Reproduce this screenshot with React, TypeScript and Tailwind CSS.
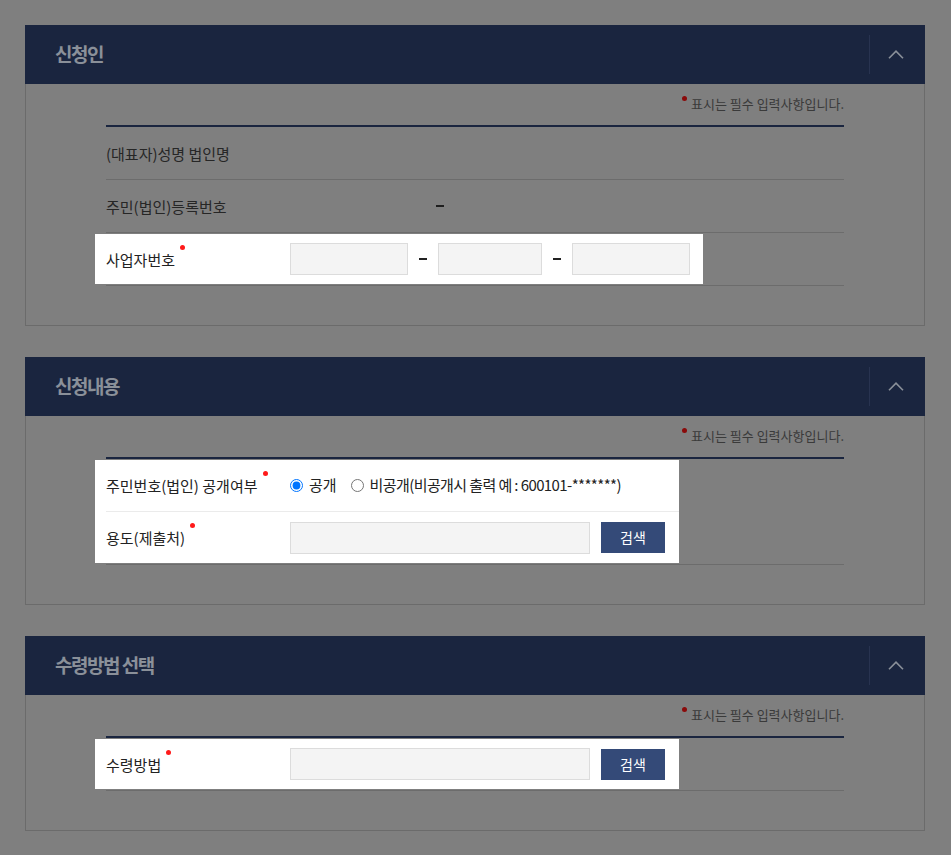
import type { ReactNode } from "react";

const FONT = { fontFamily: '"Noto Sans CJK KR", "Noto Sans", sans-serif' };

function RequiredDot({ dim = false }: { dim?: boolean }) {
  return (
    <span
      className={`absolute -right-[10px] -top-[4px] h-[5px] w-[5px] rounded-full ${
        dim ? "bg-[#8a0a0a]" : "bg-[#ff1a1a]"
      }`}
    />
  );
}

function Label({ text, required, dim }: { text: string; required?: boolean; dim?: boolean }) {
  return (
    <div className="w-[184px] shrink-0">
      <span className={`relative text-[15px] ${dim ? "text-[#262626]" : "text-[#222]"}`}>
        {text}
        {required && <RequiredDot dim={dim} />}
      </span>
    </div>
  );
}

function Dash({ dim }: { dim?: boolean }) {
  return <span className={`block h-[2px] w-[8px] ${dim ? "bg-[#1e1e1e]" : "bg-[#222]"}`} />;
}

function Panel({ title, children }: { title: string; children: ReactNode }) {
  return (
    <section className="w-[900px]">
      <div className="flex h-[59px] items-center justify-between bg-[#1a253f]">
        <h2 className="pl-[30px] text-[19px] font-bold tracking-[-1.5px] text-[#8a9099]">{title}</h2>
        <div className="flex h-[39px] w-[56px] items-center justify-center border-l border-[#283350] pr-[4px]">
          <svg width="16" height="9" viewBox="0 0 16 9">
            <path d="M1 8.2 L8 1.2 L15 8.2" stroke="#8a9099" strokeWidth="1.6" fill="none" />
          </svg>
        </div>
      </div>
      <div className="border border-t-0 border-[#6b6b6b] px-[80px] pb-[39px] pt-[10px]">
        <p className="flex h-[20px] items-center justify-end text-[13px] text-[#3a3a3a]">
          <span className="mr-[4px] -translate-y-[6px]">
            <span className="block h-[5px] w-[5px] rounded-full bg-[#8a0a0a]" />
          </span>
          표시는 필수 입력사항입니다.
        </p>
        <div className="mt-[11px] border-t-2 border-[#1a253f]">{children}</div>
      </div>
    </section>
  );
}

function DimRow({ label, children }: { label: string; children?: ReactNode }) {
  return (
    <div className="flex h-[53px] items-center border-b border-[#6c6c6c]">
      <Label text={label} dim />
      {children}
    </div>
  );
}

function Spot({ width, children }: { width: number; children: ReactNode }) {
  return (
    <div className="border-b border-[#6c6c6c] py-[1px]">
      <div className="-ml-[11px] bg-white pl-[11px]" style={{ width }}>
        {children}
      </div>
    </div>
  );
}

function TextInput({ className }: { className: string }) {
  return (
    <input
      type="text"
      className={`h-[32px] border border-[#dcdcdc] bg-[#f4f4f4] px-2 text-[14px] outline-none ${className}`}
    />
  );
}

function SearchButton() {
  return (
    <button type="button" className="ml-[11px] h-[31px] w-[64px] bg-[#344a78] text-[14px] text-white">
      검색
    </button>
  );
}

export default function App() {
  return (
    <div className="min-h-[855px] bg-[#7f7f7f] pl-[25px] pt-[25px]" style={FONT}>
      <div className="flex flex-col gap-[31px]">
        <Panel title="신청인">
          <DimRow label="(대표자)성명 법인명" />
          <DimRow label="주민(법인)등록번호">
            <span className="ml-[146px]">
              <Dash dim />
            </span>
          </DimRow>
          <Spot width={608}>
            <div className="flex h-[50px] items-center">
              <Label text="사업자번호" required />
              <TextInput className="w-[118px]" />
              <span className="flex w-[30px] justify-center">
                <Dash />
              </span>
              <TextInput className="w-[104px]" />
              <span className="flex w-[30px] justify-center">
                <Dash />
              </span>
              <TextInput className="w-[118px]" />
            </div>
          </Spot>
        </Panel>

        <Panel title="신청내용">
          <Spot width={584}>
            <div className="flex h-[52px] items-center border-b border-[#ebebeb]">
              <Label text="주민번호(법인) 공개여부" required />
              <label className="flex items-center text-[15px] text-[#222]">
                <input type="radio" name="open" defaultChecked className="m-0 h-[13px] w-[13px]" />
                <span className="ml-[6px]">공개</span>
              </label>
              <label className="ml-[14px] flex items-center text-[15px] text-[#222]">
                <input type="radio" name="open" className="m-0 h-[13px] w-[13px]" />
                <span className="ml-[6px] tracking-[-0.6px]">비공개(비공개시 출력 예 : 600101-*******)</span>
              </label>
            </div>
            <div className="flex h-[51px] items-center">
              <Label text="용도(제출처)" required />
              <TextInput className="w-[300px]" />
              <SearchButton />
            </div>
          </Spot>
        </Panel>

        <Panel title="수령방법 선택">
          <Spot width={584}>
            <div className="flex h-[50px] items-center">
              <Label text="수령방법" required />
              <TextInput className="w-[300px]" />
              <SearchButton />
            </div>
          </Spot>
        </Panel>
      </div>
    </div>
  );
}
